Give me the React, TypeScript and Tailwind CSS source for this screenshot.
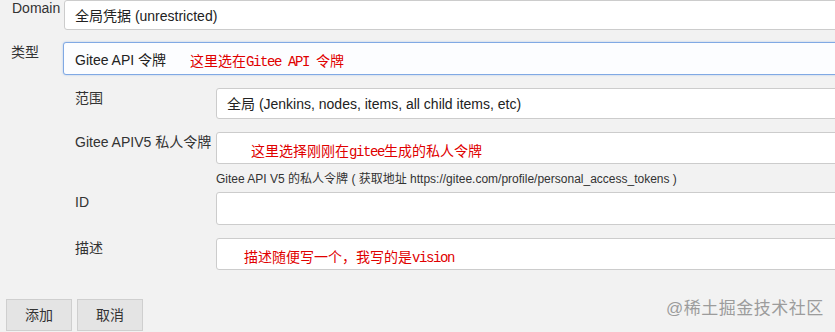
const sans = "font-['Liberation_Sans','Noto_Sans_CJK_SC',sans-serif]";

function Mono({ children }: { children: string }) {
  return <span className="font-['Liberation_Mono',monospace] text-[14px] tracking-[-1.4px]">{children}</span>;
}

function Note({ children }: { children: React.ReactNode }) {
  return (
    <span className="text-[14px] text-[#e00000] font-['Noto_Sans_CJK_SC',serif] translate-y-[3px] inline-block">
      {children}
    </span>
  );
}

function Field({
  h,
  focus,
  children,
}: {
  h: string;
  focus?: boolean;
  children?: React.ReactNode;
}) {
  return (
    <div
      className={
        "flex-1 -mr-[10px] flex items-center rounded-[3px] border text-[14px] text-[#222] " +
        h +
        (focus
          ? " border-[#80a9e4] bg-[#fcfdff] shadow-[0_0_2px_rgba(102,153,230,0.5)]"
          : " border-[#cccccc] bg-white")
      }
    >
      {children}
    </div>
  );
}

export default function App() {
  return (
    <div className={"relative w-[835px] h-[332px] overflow-hidden bg-[#f2f2f2] text-[#333] " + sans}>
      {/* Domain */}
      <div className="flex">
        <div className="w-[64px] pl-[12px] pt-0 text-[14px] leading-[16px]">Domain</div>
        <Field h="h-[30px]">
          <span className="pl-[10px] pt-[3px]">全局凭据 (unrestricted)</span>
        </Field>
      </div>

      {/* 类型 */}
      <div className="flex mt-[12px]">
        <div className="w-[63px] pl-[11px] pt-[2px] text-[14px] leading-[16px]">类型</div>
        <Field h="h-[33px]" focus>
          <span className="pl-[11px] pt-[3px] w-[126px]">Gitee API 令牌</span>
          <Note>
            这里选在<Mono>Gitee API </Mono>令牌
          </Note>
        </Field>
      </div>

      {/* nested */}
      <div className="flex flex-col">
        <div className="flex mt-[13px]">
          <div className="w-[216px] pl-[75px] pt-[2px] text-[14px] leading-[16px]">范围</div>
          <Field h="h-[31px]">
            <span className="pl-[10px] pt-[2px]">全局 (Jenkins, nodes, items, all child items, etc)</span>
          </Field>
        </div>

        <div className="flex mt-[13px]">
          <div className="w-[216px] pl-[75px] pt-[2px] text-[14px] leading-[16px]">Gitee APIV5 私人令牌</div>
          <Field h="h-[32px]">
            <span className="pl-[34px]">
              <Note>
                这里选择刚刚在<Mono>gitee</Mono>生成的私人令牌
              </Note>
            </span>
          </Field>
        </div>

        <div className="pl-[216px] mt-[8px] text-[12px] leading-[14px] text-[#333]">
          Gitee API V5 的私人令牌 ( 获取地址 https://gitee.com/profile/personal_access_tokens )
        </div>

        <div className="flex mt-[6px]">
          <div className="w-[216px] pl-[75px] pt-[2px] text-[14px] leading-[16px]">ID</div>
          <Field h="h-[33px]" />
        </div>

        <div className="flex mt-[13px]">
          <div className="w-[216px] pl-[75px] pt-[2px] text-[14px] leading-[16px]">描述</div>
          <Field h="h-[32px]">
            <span className="pl-[27px]">
              <Note>
                描述随便写一个，我写的是<Mono>vision</Mono>
              </Note>
            </span>
          </Field>
        </div>
      </div>

      {/* buttons */}
      <div className="flex gap-[5px] pl-[6px] mt-[29px]">
        <button className="w-[66px] h-[32px] border border-[#cfcfcf] bg-[#e4e4e4] text-[14px] text-[#333]">添加</button>
        <button className="w-[66px] h-[32px] border border-[#cfcfcf] bg-[#e4e4e4] text-[14px] text-[#333]">取消</button>
      </div>

      <div className="absolute left-[666px] top-[298px] text-[17px] leading-[22px] text-[#9c9c9c] tracking-[0.5px]">
        @稀土掘金技术社区
      </div>
    </div>
  );
}
